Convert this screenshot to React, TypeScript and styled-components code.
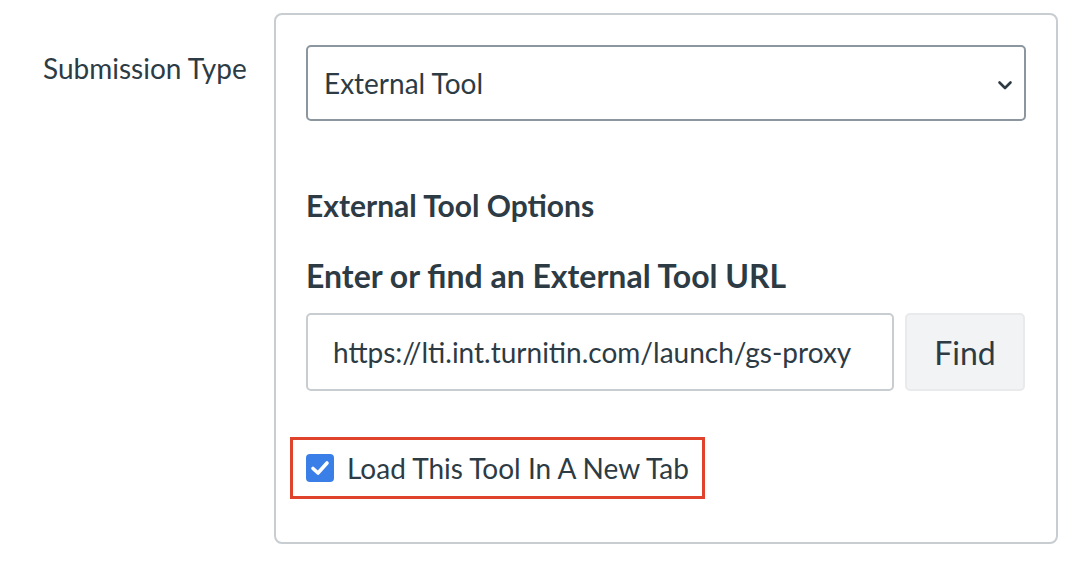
import styled, { createGlobalStyle } from 'styled-components';

const GlobalStyle = createGlobalStyle`
  body {
    margin: 0;
    background: #ffffff;
    font-family: Lato, "Open Sans", sans-serif;
    color: #2d3b45;
  }
`;

const Page = styled.div`
  display: flex;
  align-items: flex-start;
  padding: 13px 0 0 43px;
  width: 1084px;
  height: 570px;
  box-sizing: border-box;
`;

const Label = styled.div`
  width: 231px;
  padding-top: 41px;
  font-size: 28px;
  line-height: 1;
`;

const Panel = styled.div`
  width: 784px;
  height: 531px;
  box-sizing: border-box;
  border: 2px solid #c7cdd1;
  border-radius: 8px;
  padding: 30px 30px 0 30px;
  display: flex;
  flex-direction: column;
`;

const SelectBox = styled.div`
  height: 76px;
  box-sizing: border-box;
  border: 2px solid #8b969e;
  border-radius: 5px;
  display: flex;
  align-items: center;
  justify-content: space-between;
  padding: 0 11px 0 16px;
  font-size: 28px;
`;

const Chevron = styled.svg`
  width: 16px;
  height: 11px;
  margin-top: 4px;
`;

const Subheading = styled.div`
  margin-top: 69px;
  font-weight: 700;
  font-size: 30px;
  line-height: 1;
`;

const Heading = styled.div`
  margin-top: 40px;
  font-weight: 700;
  font-size: 32px;
  line-height: 1;
`;

const UrlRow = styled.div`
  display: flex;
  gap: 11px;
  margin-top: 21px;
  height: 78px;
`;

const UrlInput = styled.div`
  width: 588px;
  box-sizing: border-box;
  border: 2px solid #c7cdd1;
  border-radius: 5px;
  display: flex;
  align-items: center;
  padding-left: 25px;
  font-size: 28px;
`;

const FindButton = styled.div`
  width: 120px;
  box-sizing: border-box;
  border: 2px solid #e8eaec;
  border-radius: 5px;
  background: #f2f3f4;
  display: flex;
  align-items: center;
  justify-content: center;
  font-size: 32px;
`;

const Highlight = styled.div`
  align-self: flex-start;
  margin-top: 46px;
  margin-left: -16px;
  border: 3px solid #e0432b;
  padding: 0 13px;
  height: 62px;
  box-sizing: border-box;
  display: flex;
  align-items: center;
  gap: 13px;
  font-size: 28px;
`;

const CheckBox = styled.span`
  width: 28px;
  height: 28px;
  border-radius: 4px;
  background: #3a7ee8;
  display: flex;
  align-items: center;
  justify-content: center;
`;

export default function App() {
  return (
    <>
      <GlobalStyle />
      <Page>
        <Label>Submission Type</Label>
        <Panel>
          <SelectBox>
            <span>External Tool</span>
            <Chevron viewBox="0 0 16 11">
              <path d="M2.5 2.5 L8 8 L13.5 2.5" fill="none" stroke="#2d3b45" strokeWidth="2.6" strokeLinecap="round" strokeLinejoin="round" />
            </Chevron>
          </SelectBox>
          <Subheading>External Tool Options</Subheading>
          <Heading>Enter or find an External Tool URL</Heading>
          <UrlRow>
            <UrlInput>https://lti.int.turnitin.com/launch/gs-proxy</UrlInput>
            <FindButton>Find</FindButton>
          </UrlRow>
          <Highlight>
            <CheckBox>
              <svg width="24" height="24" viewBox="0 0 24 24">
                <path d="M5 12.5 L10 17 L19 7" fill="none" stroke="#ffffff" strokeWidth="3.6" strokeLinecap="round" strokeLinejoin="round" />
              </svg>
            </CheckBox>
            <span>Load This Tool In A New Tab</span>
          </Highlight>
        </Panel>
      </Page>
    </>
  );
}
